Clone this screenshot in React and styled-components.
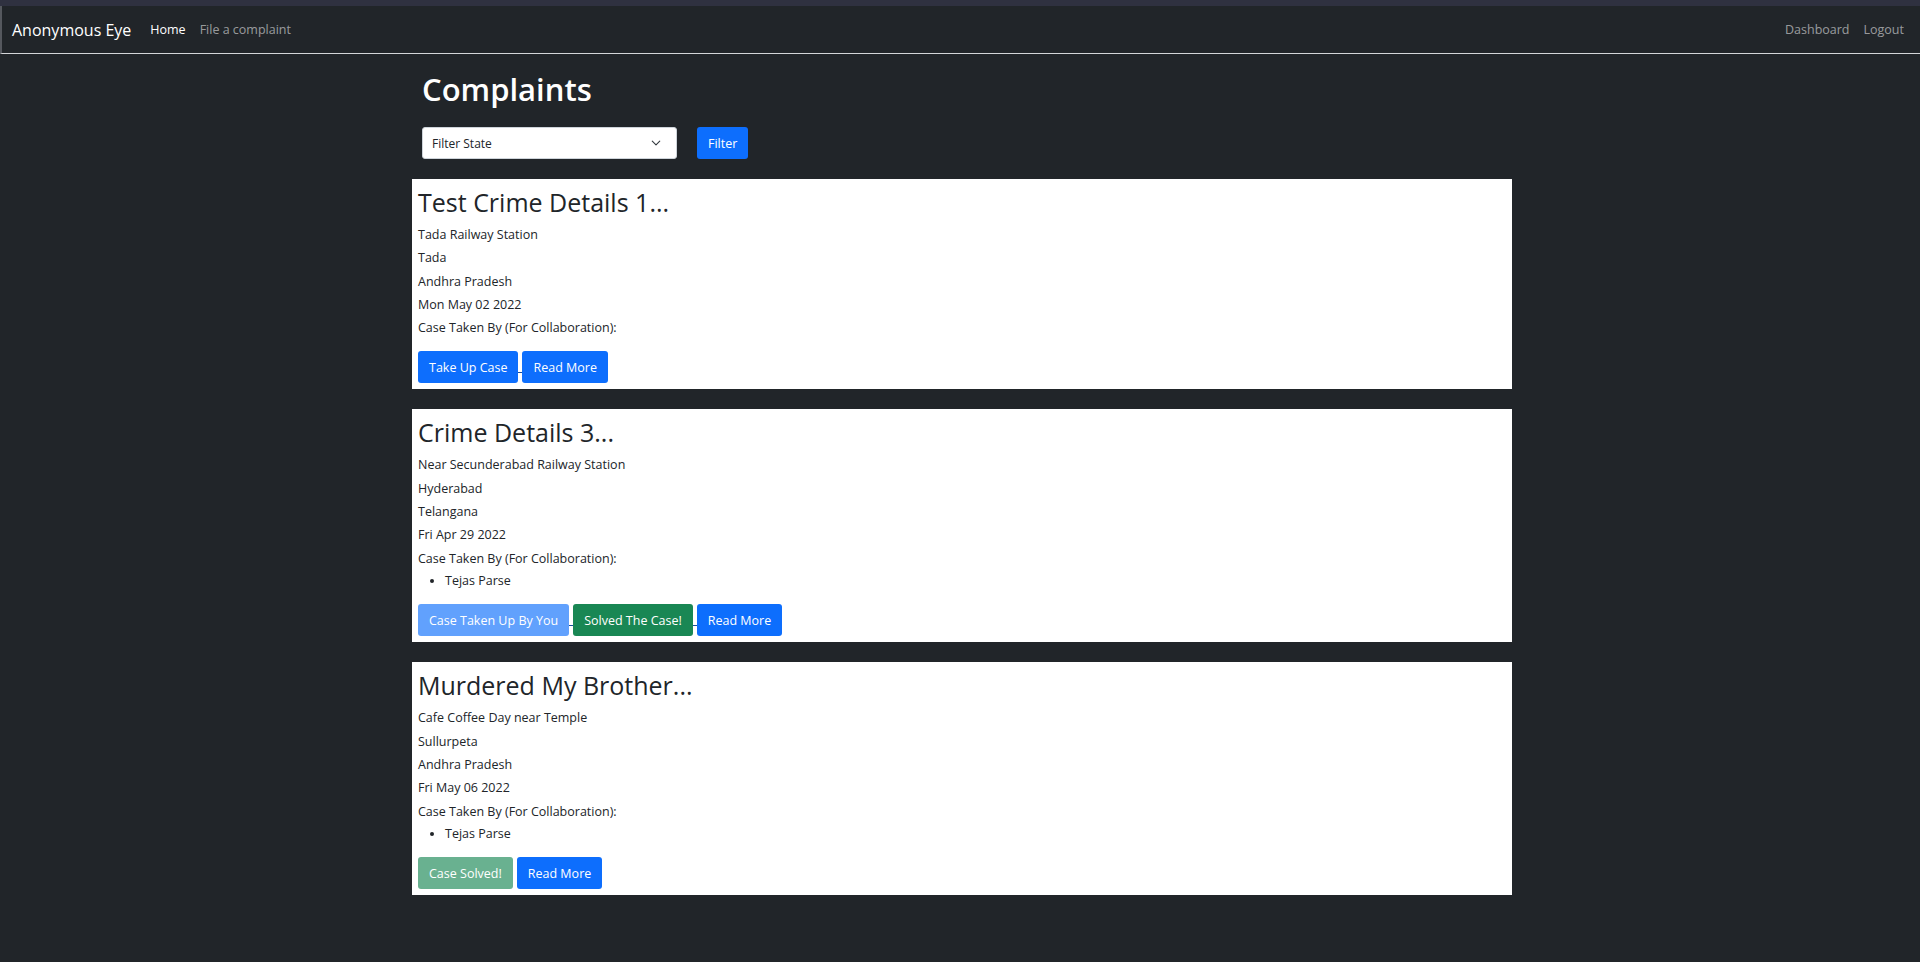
import React from 'react';
import styled, { createGlobalStyle } from 'styled-components';

const GlobalStyle = createGlobalStyle`
	html, body {
		margin: 0;
		padding: 0;
		background: #212529;
		font-family: 'Open Sans', 'Noto Sans', sans-serif;
		color: #212529;
	}
	* { box-sizing: border-box; }
`;

const complaints = [
	{
		title: 'Test Crime Details 1...',
		place: 'Tada Railway Station',
		city: 'Tada',
		state: 'Andhra Pradesh',
		date: 'Mon May 02 2022',
		takenBy: [],
		actions: [
			{ label: 'Take Up Case', variant: 'primary', link: true },
			{ label: 'Read More', variant: 'primary' },
		],
	},
	{
		title: 'Crime Details 3...',
		place: 'Near Secunderabad Railway Station',
		city: 'Hyderabad',
		state: 'Telangana',
		date: 'Fri Apr 29 2022',
		takenBy: ['Tejas Parse'],
		actions: [
			{ label: 'Case Taken Up By You', variant: 'primaryMuted', link: true },
			{ label: 'Solved The Case!', variant: 'success', link: true },
			{ label: 'Read More', variant: 'primary' },
		],
	},
	{
		title: 'Murdered My Brother...',
		place: 'Cafe Coffee Day near Temple',
		city: 'Sullurpeta',
		state: 'Andhra Pradesh',
		date: 'Fri May 06 2022',
		takenBy: ['Tejas Parse'],
		actions: [
			{ label: 'Case Solved!', variant: 'successMuted' },
			{ label: 'Read More', variant: 'primary' },
		],
	},
];

const Chevron = () => (
	<svg width="10" height="10" viewBox="0 0 16 16">
		<path d="M2 5l6 6 6-6" fill="none" stroke="#343a40" strokeWidth="1.8" strokeLinecap="round" strokeLinejoin="round" />
	</svg>
);

const App = () => {
	return (
		<>
			<GlobalStyle />
			<TopStrip />
			<StyledNavbar>
				<StyledNavLeft>
					<StyledBrand>Anonymous Eye</StyledBrand>
					<StyledNavLink active>Home</StyledNavLink>
					<StyledNavLink>File a complaint</StyledNavLink>
				</StyledNavLeft>
				<StyledNavRight>
					<StyledNavLink>Dashboard</StyledNavLink>
					<StyledNavLink>Logout</StyledNavLink>
				</StyledNavRight>
			</StyledNavbar>

			<StyledMain>
				<StyledHeading>Complaints</StyledHeading>
				<StyledFilterRow>
					<StyledSelect>
						<span>Filter State</span>
						<Chevron />
					</StyledSelect>
					<Button variant="primary">Filter</Button>
				</StyledFilterRow>

				<StyledList>
					{complaints.map((c) => (
						<StyledCard key={c.title}>
							<StyledTitle>{c.title}</StyledTitle>
							<StyledLine>{c.place}</StyledLine>
							<StyledLine>{c.city}</StyledLine>
							<StyledLine>{c.state}</StyledLine>
							<StyledLine>{c.date}</StyledLine>
							<StyledLine>Case Taken By (For Collaboration):</StyledLine>
							<StyledTakenList>
								{c.takenBy.map((name) => (
									<li key={name}>{name}</li>
								))}
							</StyledTakenList>
							<StyledActions>
								{c.actions.map((a, i) => (
									<React.Fragment key={a.label}>
										<Button variant={a.variant}>{a.label}</Button>
										{i < c.actions.length - 1 && <LinkGap underlined={a.link} />}
									</React.Fragment>
								))}
							</StyledActions>
						</StyledCard>
					))}
				</StyledList>
			</StyledMain>
		</>
	);
};

export default App;

const TopStrip = styled.div`
	height: 6px;
	background: #2f3140;
`;

const StyledNavbar = styled.nav`
	height: 48px;
	display: flex;
	align-items: center;
	justify-content: space-between;
	padding: 0 16px 0 12px;
	background: #212529;
	border-bottom: 1px solid #d4d6d9;
	border-left: 2px solid #55585e;
`;

const StyledNavLeft = styled.div`
	display: flex;
	align-items: center;
`;

const StyledNavRight = styled.div`
	display: flex;
	align-items: center;
	margin-right: -7px;
`;

const StyledBrand = styled.span`
	font-size: 16px;
	color: #fff;
	margin-right: 12px;
	margin-left: -2px;
`;

const StyledNavLink = styled.span`
	font-size: 12.5px;
	padding: 0 7px;
	color: ${(p) => (p.active ? '#fff' : 'rgba(255, 255, 255, 0.55)')};
`;

const StyledMain = styled.main`
	width: 1100px;
	margin: 0 auto;
	padding: 16px 0 40px;
`;

const StyledHeading = styled.h2`
	margin: 0 0 0 12px;
	font-size: 31px;
	font-weight: 600;
	line-height: 38px;
	color: #fff;
`;

const StyledFilterRow = styled.div`
	display: flex;
	align-items: center;
	gap: 20px;
	margin: 19px 0 20px 12px;
`;

const StyledSelect = styled.div`
	width: 255px;
	height: 32px;
	display: flex;
	align-items: center;
	justify-content: space-between;
	padding: 0 15px 0 9px;
	background: #fff;
	border: 1px solid #ced4da;
	border-radius: 3px;
	font-size: 12px;
	color: #212529;
`;

const StyledList = styled.div`
	display: flex;
	flex-direction: column;
	gap: 20px;
	margin: 0 -2px 0 2px;
`;

const StyledCard = styled.section`
	background: #fff;
	padding: 5px 6px 6px;
`;

const StyledTitle = styled.h3`
	margin: 0 0 3px;
	font-size: 25px;
	font-weight: 500;
	line-height: 36px;
	color: #212529;
`;

const StyledLine = styled.p`
	margin: 0;
	font-size: 12.5px;
	line-height: 23.3px;
	color: #212529;
`;

const StyledTakenList = styled.ul`
	margin: 0;
	padding-left: 27px;
	font-size: 12.5px;
	line-height: 22.5px;
	color: #212529;
`;

const StyledActions = styled.div`
	display: flex;
	align-items: flex-end;
	margin-top: 12px;
`;

const LinkGap = styled.span`
	width: 4px;
	height: 10px;
	margin-bottom: 10px;
	border-bottom: 1px solid ${(p) => (p.underlined ? '#1a4f9c' : 'transparent')};
`;

const variants = {
	primary: '#0d6efd',
	primaryMuted: '#61a1fd',
	success: '#198754',
	successMuted: '#69b190',
};

const Button = styled.button`
	height: 32px;
	padding: 0 11px;
	border: none;
	border-radius: 3px;
	background: ${(p) => variants[p.variant]};
	color: #fff;
	font-family: inherit;
	font-size: 12.5px;
	cursor: pointer;
`;
